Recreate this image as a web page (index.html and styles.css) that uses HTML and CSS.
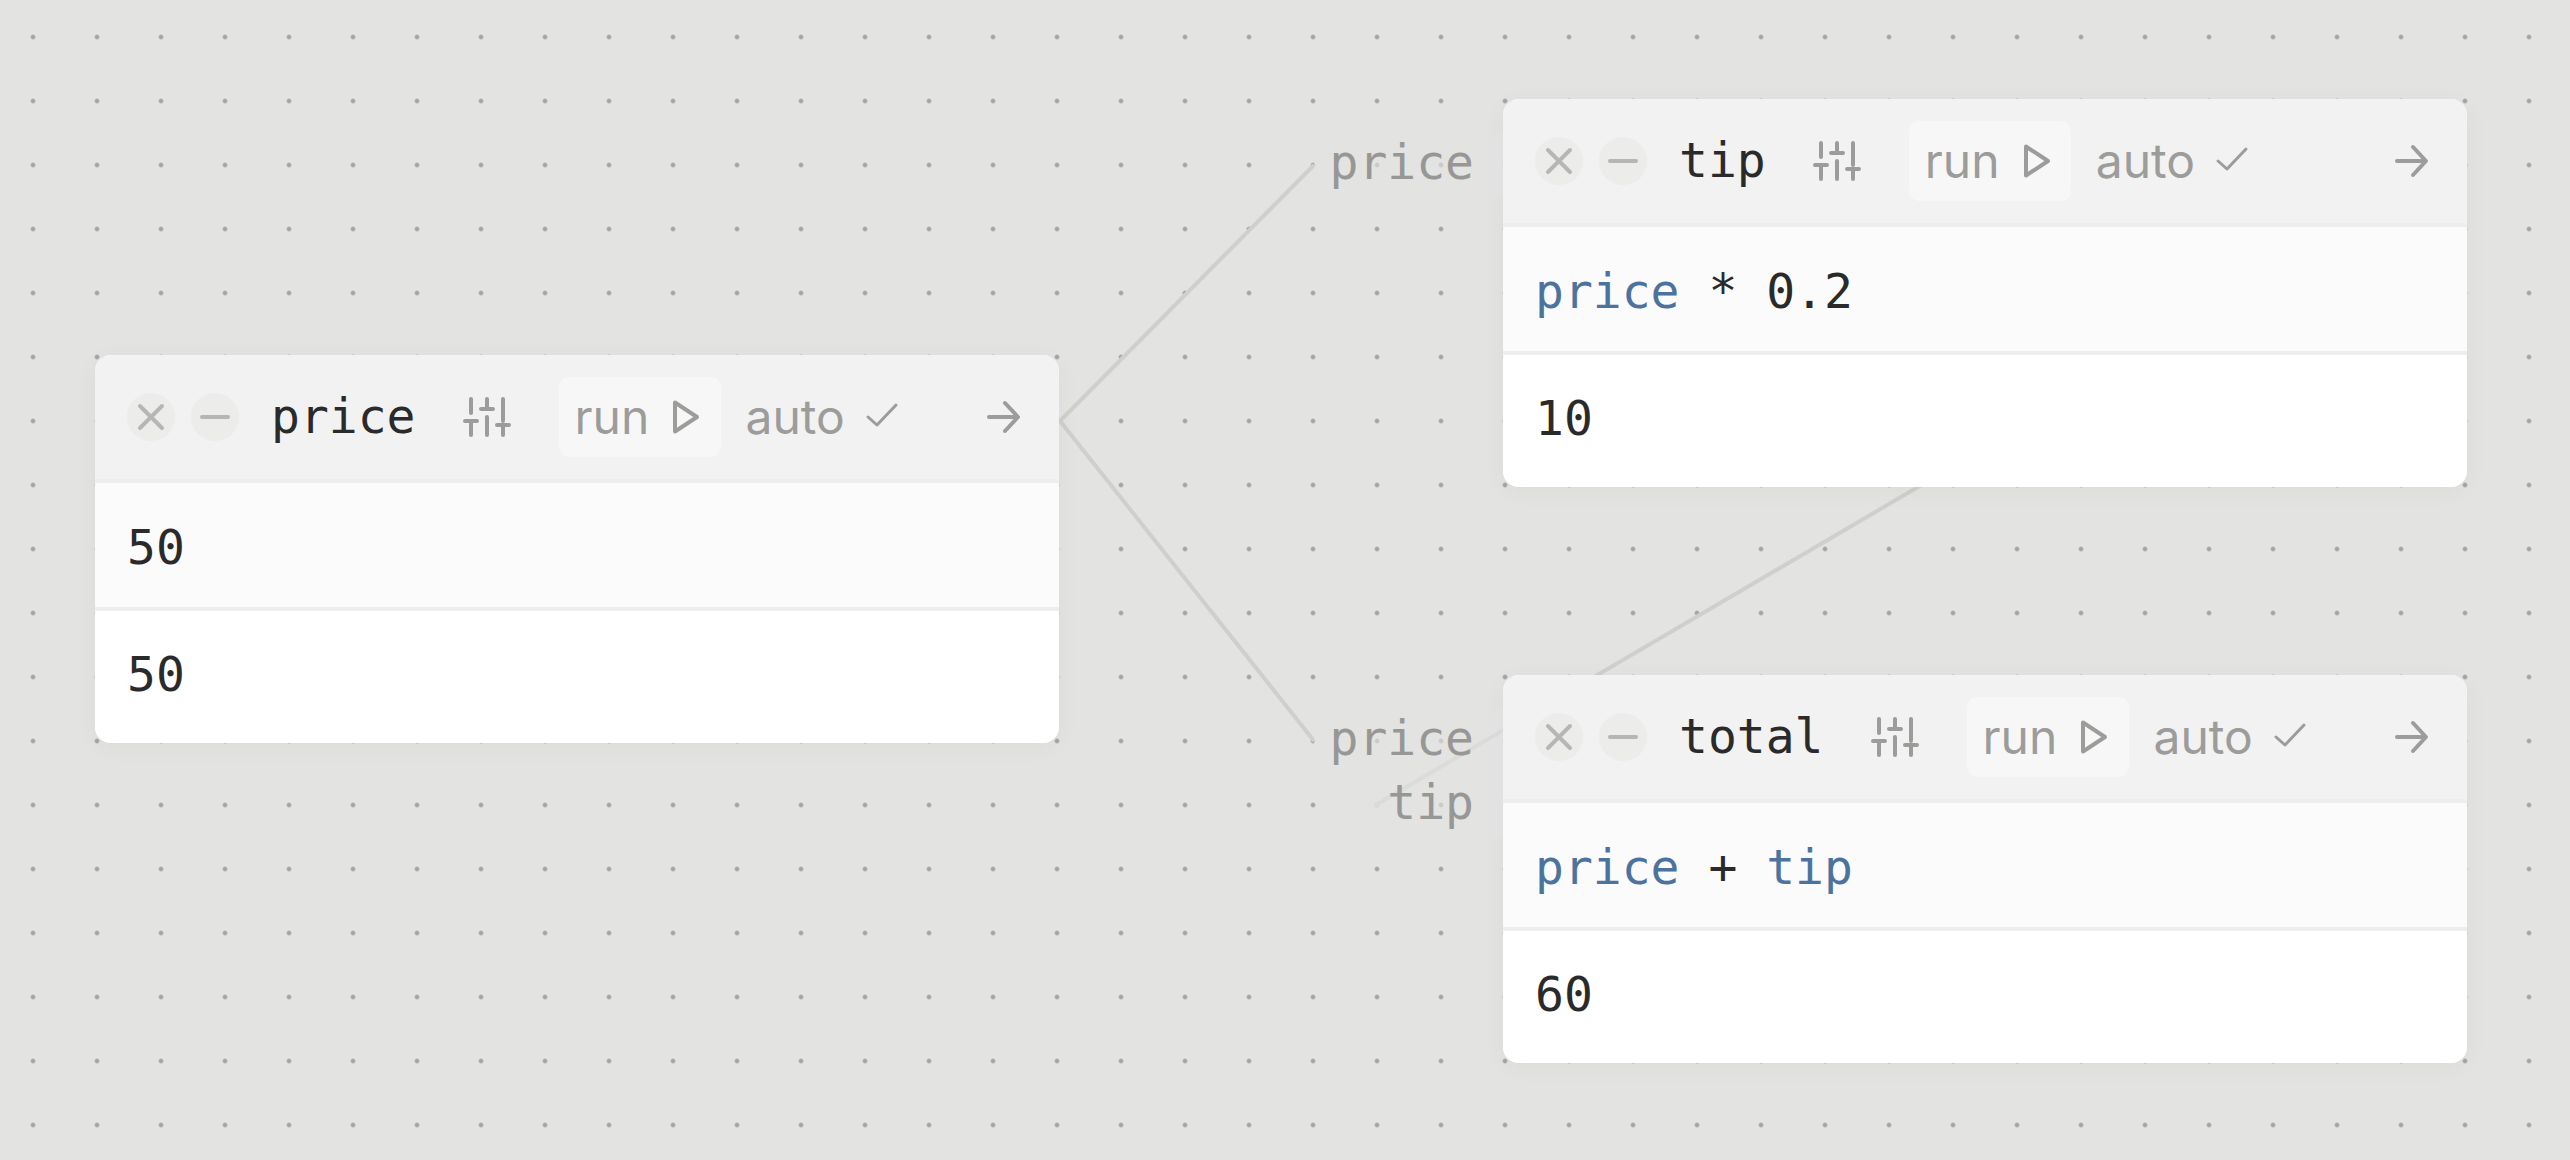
FILE: index.html
```html
<!DOCTYPE html>
<html lang="en">
<head>
<meta charset="utf-8">
<title>Notebook graph</title>
<link rel="stylesheet" href="styles.css">
</head>
<body>
<svg width="0" height="0" class="defs">
  <symbol id="i-close" viewBox="0 0 48 48"><path d="M13 13 35 35M35 13 13 35"/></symbol>
  <symbol id="i-minus" viewBox="0 0 48 48"><path d="M11 24H37"/></symbol>
  <symbol id="i-sliders" viewBox="0 0 48 48"><path d="M8 6V20M8 30V42M2 28H14M24 6V16M24 24V42M18 16H30M40 6V28M40 34V42M34 32H46"/></symbol>
  <symbol id="i-play" viewBox="0 0 48 48"><path d="M13 9.500V38.500L35 24Z"/></symbol>
  <symbol id="i-check" viewBox="0 0 48 48"><path d="M10 25 19 33 38 13"/></symbol>
  <symbol id="i-arrow" viewBox="0 0 48 48"><path d="M10 24H38M26 10 39 24 26 38"/></symbol>
</svg>
<main class="canvas">
  <svg class="wires" width="2570" height="1160">
    <path d="M1060 421 1314 165"/>
    <path d="M1060 421 1314 741"/>
    <path d="M2467 165 1374 806"/>
  </svg>

  <section class="node node-price">
    <header class="head">
      <button class="dot-btn"><svg class="ic ic-soft"><use href="#i-close"/></svg></button>
      <button class="dot-btn"><svg class="ic ic-soft"><use href="#i-minus"/></svg></button>
      <span class="name">price</span>
      <svg class="ic sliders"><use href="#i-sliders"/></svg>
      <button class="run">run<svg class="ic play"><use href="#i-play"/></svg></button>
      <span class="auto">auto<svg class="ic check"><use href="#i-check"/></svg></span>
      <svg class="ic arrow"><use href="#i-arrow"/></svg>
    </header>
    <div class="code">50</div>
    <div class="out">50</div>
  </section>

  <section class="node node-tip">
    <div class="ports">
      <div class="port">price</div>
    </div>
    <header class="head">
      <button class="dot-btn"><svg class="ic ic-soft"><use href="#i-close"/></svg></button>
      <button class="dot-btn"><svg class="ic ic-soft"><use href="#i-minus"/></svg></button>
      <span class="name">tip</span>
      <svg class="ic sliders"><use href="#i-sliders"/></svg>
      <button class="run">run<svg class="ic play"><use href="#i-play"/></svg></button>
      <span class="auto">auto<svg class="ic check"><use href="#i-check"/></svg></span>
      <svg class="ic arrow"><use href="#i-arrow"/></svg>
    </header>
    <div class="code"><span class="ref">price</span> * 0.2</div>
    <div class="out">10</div>
  </section>

  <section class="node node-total">
    <div class="ports">
      <div class="port">price</div>
      <div class="port">tip</div>
    </div>
    <header class="head">
      <button class="dot-btn"><svg class="ic ic-soft"><use href="#i-close"/></svg></button>
      <button class="dot-btn"><svg class="ic ic-soft"><use href="#i-minus"/></svg></button>
      <span class="name">total</span>
      <svg class="ic sliders"><use href="#i-sliders"/></svg>
      <button class="run">run<svg class="ic play"><use href="#i-play"/></svg></button>
      <span class="auto">auto<svg class="ic check"><use href="#i-check"/></svg></span>
      <svg class="ic arrow"><use href="#i-arrow"/></svg>
    </header>
    <div class="code"><span class="ref">price</span> + <span class="ref">tip</span></div>
    <div class="out">60</div>
  </section>
</main>
</body>
</html>
```
FILE: styles.css
```css
* { box-sizing: border-box; }
html, body { margin: 0; padding: 0; }
.defs { position: absolute; }
.canvas {
  position: relative;
  width: 2570px;
  height: 1160px;
  overflow: hidden;
  background-color: #e3e3e2;
  background-image: radial-gradient(circle at 33px 37px, #a6a6a5 1.6px, rgba(166,166,165,0) 3px);
  background-size: 64px 64px;
}
.wires { position: absolute; left: 0; top: 0; }
.wires path { fill: none; stroke: #cfcfcc; stroke-width: 4px; }
.node {
  position: absolute;
  width: 964px;
  border-radius: 16px;
  background: #fff;
  box-shadow: 0 4px 24px rgba(0,0,0,.04);
  font-family: "DejaVu Sans Mono", monospace;
  font-size: 48px;
  color: #2a2a2a;
}
.node-price { left: 95px; top: 355px; }
.node-tip { left: 1503px; top: 99px; }
.node-total { left: 1503px; top: 675px; }
.ports {
  position: absolute;
  right: 100%;
  top: 34px;
  display: flex;
  flex-direction: column;
  align-items: flex-end;
  color: #979796;
}
.port {
  height: 64px;
  line-height: 59px;
  padding: 0 29px 0 16px;
  background: rgba(227,227,226,.6);
}
.head {
  display: flex;
  align-items: center;
  height: 128px;
  padding: 0 32px;
  border-bottom: 4px solid #eeeeed;
  border-radius: 16px 16px 0 0;
  background: #f2f2f2;
}
.ic {
  display: block;
  flex: none;
  width: 48px;
  height: 48px;
  fill: none;
  stroke: #9c9c9a;
  stroke-width: 4px;
  stroke-linecap: round;
  stroke-linejoin: round;
}
.ic-soft { stroke: #b6b6b4; }
.dot-btn {
  display: flex;
  align-items: center;
  justify-content: center;
  flex: none;
  width: 48px;
  height: 48px;
  margin-right: 16px;
  padding: 0;
  border: 0;
  border-radius: 50%;
  background: #ececeb;
}
.name { margin: 0 47px 0 16px; padding-bottom: 2px; }
.sliders { margin-right: 48px; }
.run, .auto {
  display: flex;
  align-items: center;
  font-family: Inter, sans-serif;
  font-size: 48px;
  color: #9c9c9a;
}
.run {
  height: 80px;
  width: 162px;
  padding: 0 0 2px 16px;
  border: 0;
  border-radius: 10px;
  background: #f7f7f7;
  margin-right: 25px;
}
.auto { padding-bottom: 2px; }
.play { margin: 2px 0 0 13px; stroke-width: 4px; }
.check { margin-left: 13px; stroke-width: 3px; }
.arrow { margin-left: auto; }
.code, .out {
  display: flex;
  align-items: center;
  white-space: pre;
  padding: 0 32px;
}
.code {
  height: 128px;
  padding-top: 3px;
  border-bottom: 4px solid #eeeeed;
  background: #fbfbfb;
}
.out { height: 132px; padding-bottom: 6px; border-radius: 0 0 16px 16px; background: #fff; }
.ref { color: #4c739e; }
```
